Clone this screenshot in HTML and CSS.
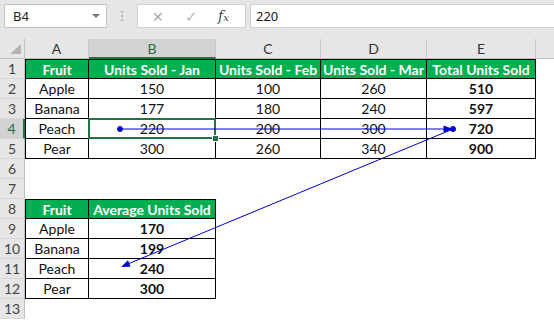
FILE: index.html
```html
<!DOCTYPE html>
<html lang="en">
<head>
    <meta charset="UTF-8">
    <title>Trace Dependents</title>
    <link rel="stylesheet" href="styles.css">
</head>
<body>

    <!-- Barre de formule -->
    <div class="topbar">
        <div class="namebox">
            <span>B4</span>
            <span class="drop"></span>
        </div>
        <div class="grip"><i></i><i></i><i></i></div>
        <div class="btns">
            <span class="x">&#x2715;</span>
            <span class="ok">&#x2713;</span>
            <span class="fx">f<small>x</small></span>
        </div>
        <div class="formula">220</div>
    </div>

    <!-- Feuille -->
    <div class="sheet">
        <div class="corner"></div>
        <div class="ch">A</div><div class="ch sel">B</div><div class="ch">C</div><div class="ch">D</div><div class="ch">E</div><div class="ch last"></div>

        <div class="rh">1</div>
        <div class="c b t l g">Fruit</div><div class="c b t g">Units Sold - Jan</div><div class="c b t g">Units Sold - Feb</div><div class="c b t g">Units Sold - Mar</div><div class="c b t g">Total Units Sold</div><div class="c"></div>

        <div class="rh">2</div>
        <div class="c b l">Apple</div><div class="c b">150</div><div class="c b">100</div><div class="c b">260</div><div class="c b strong">510</div><div class="c"></div>

        <div class="rh">3</div>
        <div class="c b l">Banana</div><div class="c b">177</div><div class="c b">180</div><div class="c b">240</div><div class="c b strong">597</div><div class="c"></div>

        <div class="rh sel">4</div>
        <div class="c b l">Peach</div><div class="c b cur">220</div><div class="c b">200</div><div class="c b">300</div><div class="c b strong">720</div><div class="c"></div>

        <div class="rh">5</div>
        <div class="c b l">Pear</div><div class="c b">300</div><div class="c b">260</div><div class="c b">340</div><div class="c b strong">900</div><div class="c"></div>

        <div class="rh">6</div>
        <div class="c"></div><div class="c"></div><div class="c"></div><div class="c"></div><div class="c"></div><div class="c"></div>

        <div class="rh">7</div>
        <div class="c"></div><div class="c"></div><div class="c"></div><div class="c"></div><div class="c"></div><div class="c"></div>

        <div class="rh">8</div>
        <div class="c b t l g">Fruit</div><div class="c b t g">Average Units Sold</div><div class="c"></div><div class="c"></div><div class="c"></div><div class="c"></div>

        <div class="rh">9</div>
        <div class="c b l">Apple</div><div class="c b strong">170</div><div class="c"></div><div class="c"></div><div class="c"></div><div class="c"></div>

        <div class="rh">10</div>
        <div class="c b l">Banana</div><div class="c b strong">199</div><div class="c"></div><div class="c"></div><div class="c"></div><div class="c"></div>

        <div class="rh">11</div>
        <div class="c b l">Peach</div><div class="c b strong">240</div><div class="c"></div><div class="c"></div><div class="c"></div><div class="c"></div>

        <div class="rh">12</div>
        <div class="c b l">Pear</div><div class="c b strong">300</div><div class="c"></div><div class="c"></div><div class="c"></div><div class="c"></div>

        <div class="rh">13</div>
        <div class="c"></div><div class="c"></div><div class="c"></div><div class="c"></div><div class="c"></div><div class="c"></div>
    </div>

    <!-- Fleches des dependances -->
    <svg class="arrows" width="554" height="320" viewBox="0 0 554 320">
        <g fill="#0000cc" stroke="#0000cc" stroke-width="1">
            <line x1="120" y1="129" x2="445" y2="129"/>
            <circle cx="120" cy="129" r="2.5"/>
            <polygon points="453,129 443.5,125.5 443.5,132.5" stroke="none"/>
            <line x1="453" y1="129" x2="129" y2="263.5"/>
            <circle cx="453" cy="129" r="2.5"/>
            <polygon points="121,267 130.6,266.7 128,260.3" stroke="none"/>
        </g>
    </svg>
</body>
</html>
```

FILE: styles.css
```css
body {
    margin: 0;
    font-family: Lato, "Liberation Sans", sans-serif;
    background: #ffffff;
    position: relative;
    width: 554px;
    height: 320px;
    overflow: hidden;
}
.topbar {
    height: 39px;
    background: #e6e6e6;
    display: flex;
    align-items: flex-start;
    padding: 4px 0 0 4px;
    box-sizing: border-box;
    font-family: "Noto Sans", "Open Sans", sans-serif;
}
.namebox {
    width: 103px;
    height: 24px;
    box-sizing: border-box;
    background: white;
    border: 1px solid #c6c6c6;
    display: flex;
    align-items: center;
    justify-content: space-between;
    padding: 0 6px 0 8px;
    font-size: 13px;
    color: #222;
}
.drop {
    width: 0;
    height: 0;
    border-left: 4px solid transparent;
    border-right: 4px solid transparent;
    border-top: 4px solid #777;
}
.grip {
    width: 30px;
    height: 24px;
    display: flex;
    flex-direction: column;
    align-items: center;
    justify-content: center;
    gap: 2px;
}
.grip i {
    width: 2px;
    height: 2px;
    background: #b5b5b5;
}
.btns {
    width: 109px;
    height: 24px;
    box-sizing: border-box;
    background: white;
    border: 1px solid #d0d0d0;
    display: flex;
    align-items: center;
    padding-left: 14px;
    color: #a8a8a8;
    font-size: 14px;
}
.btns .x {
    width: 33px;
}
.btns .ok {
    width: 33px;
    color: #bcbcbc;
    font-size: 15px;
}
.btns .fx {
    font-family: "DejaVu Serif", "Liberation Serif", serif;
    font-style: italic;
    color: #444;
    font-size: 14px;
}
.btns .fx small {
    font-size: 10px;
}
.formula {
    flex: 1;
    height: 24px;
    margin-left: 4px;
    box-sizing: border-box;
    background: white;
    border: 1px solid #d0d0d0;
    border-right: none;
    padding-left: 5px;
    font-size: 13px;
    line-height: 22px;
    color: #222;
}
.sheet {
    display: grid;
    grid-template-columns: 25px 64px 127px 105px 106px 109px 1fr;
    grid-auto-rows: 20px;
    font-size: 14px;
}
.sheet > div {
    box-sizing: border-box;
    display: flex;
    align-items: center;
    justify-content: center;
}
.corner {
    background: #e6e6e6;
    border-right: 1px solid #bfbfbf;
    border-bottom: 1px solid #bfbfbf;
    position: relative;
}
.corner::after {
    content: "";
    position: absolute;
    right: 3px;
    bottom: 4px;
    border-left: 11px solid transparent;
    border-bottom: 10px solid #b4b4b4;
}
.ch {
    background: #e6e6e6;
    border-right: 1px solid #c8c8c8;
    border-bottom: 1px solid #bfbfbf;
    color: #333;
}
.ch.sel {
    background: #d2d2d2;
    color: #217346;
    border-bottom: 2px solid #217346;
}
.ch.last {
    border-right: none;
}
.rh {
    background: #e6e6e6;
    border-right: 1px solid #bfbfbf;
    border-bottom: 1px solid #d6d6d6;
    color: #444;
}
.rh.sel {
    background: #d2d2d2;
    color: #217346;
    border-right: 2px solid #217346;
}
.c {
    color: #111;
}
.b {
    border-right: 1px solid #000;
    border-bottom: 1px solid #000;
}
.l {
    border-left: 1px solid #000;
}
.t {
    border-top: 1px solid #000;
}
.g {
    background: #00b050;
    color: white;
    font-weight: bold;
}
.strong {
    font-weight: bold;
}
.cur {
    position: relative;
}
.cur::after {
    content: "";
    position: absolute;
    top: -1px;
    left: -1px;
    right: -1px;
    bottom: -1px;
    border: 2px solid #217346;
}
.cur::before {
    content: "";
    position: absolute;
    right: -4px;
    bottom: -4px;
    width: 5px;
    height: 5px;
    background: #217346;
    border: 1px solid white;
    z-index: 1;
}
.arrows {
    position: absolute;
    top: 0;
    left: 0;
    pointer-events: none;
}
```
